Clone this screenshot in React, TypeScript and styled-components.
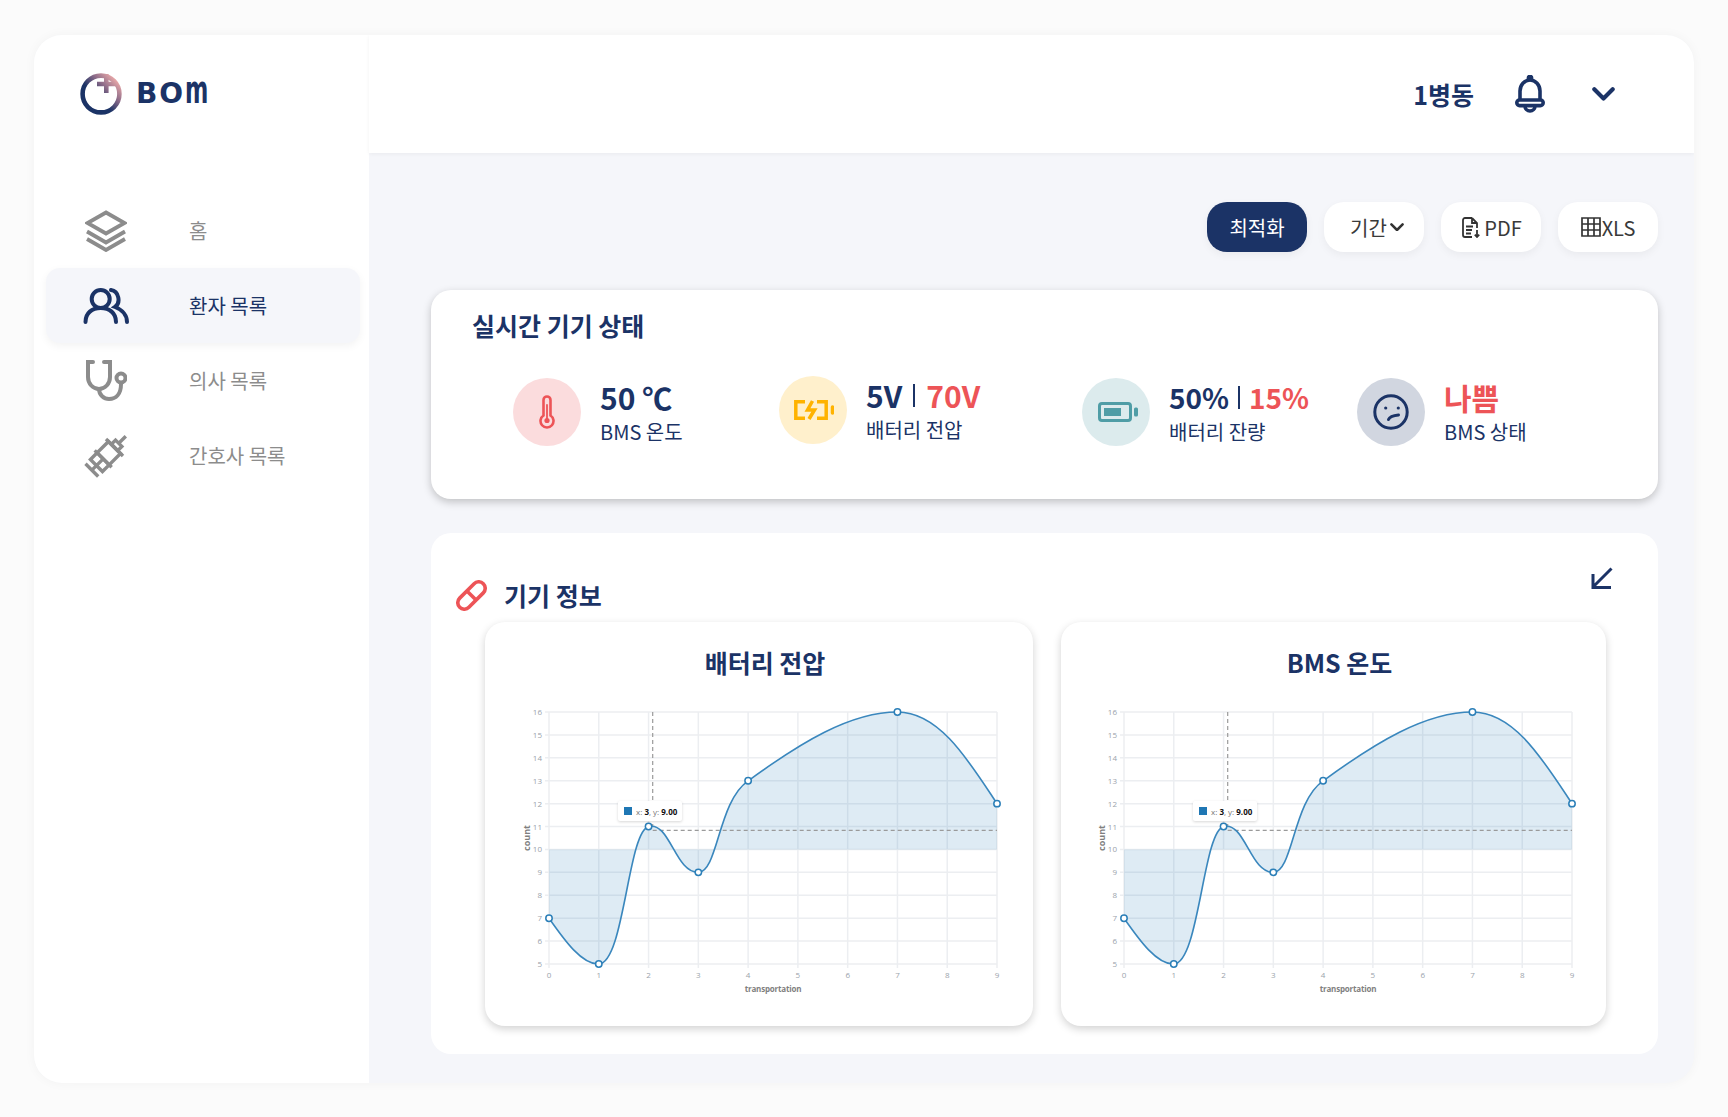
import React from "react";
import styled, { createGlobalStyle } from "styled-components";

const NAVY = "#1b3366";
const RED = "#ed5457";
const GRAY = "#8c8c8c";

const GlobalStyle = createGlobalStyle`
    html, body {
        margin: 0;
        padding: 0;
        background: #fbfbfb;
        font-family: "Noto Sans CJK KR", "Noto Sans", sans-serif;
    }
    * {
        box-sizing: border-box;
    }
`;

const Page = styled.div`
    width: 1728px;
    height: 1117px;
    padding: 35px 34px 34px;
`;

const Shell = styled.div`
    display: flex;
    width: 1660px;
    height: 1048px;
    border-radius: 28px;
    overflow: hidden;
    background: #f5f6fa;
    box-shadow: 0 0 12px rgba(0, 0, 0, 0.04);
`;

const Sidebar = styled.aside`
    width: 335px;
    flex-shrink: 0;
    background: #fff;
    padding: 38px 9px 0 12px;
`;

const Brand = styled.div`
    display: flex;
    align-items: center;
    gap: 14px;
    height: 42px;
    padding-left: 34px;
    margin-bottom: 78px;
`;

const BrandName = styled.div`
    display: flex;
    align-items: baseline;
    font-family: "DejaVu Sans", sans-serif;
    font-weight: 700;
    font-size: 28px;
    line-height: 1;
    color: ${NAVY};
    letter-spacing: 2px;
`;

const BrandTail = styled.span`
    display: inline-block;
    width: 23px;
    letter-spacing: 0;
    transform: scale(0.8, 1.33);
    transform-origin: 0 85%;
`;

const NavList = styled.nav`
    display: flex;
    flex-direction: column;
`;

const NavRow = styled.div<{ $active?: boolean }>`
    display: flex;
    align-items: center;
    height: 75px;
    padding-left: 37px;
    border-radius: 14px;
    font-size: 20px;
    color: ${(p) => (p.$active ? NAVY : GRAY)};
    background: ${(p) => (p.$active ? "#f5f6fa" : "transparent")};
    box-shadow: ${(p) => (p.$active ? "0 3px 8px rgba(0, 0, 0, 0.05)" : "none")};
`;

const NavIcon = styled.span`
    display: flex;
    align-items: center;
    justify-content: center;
    width: 46px;
    margin-right: 60px;
`;

const Content = styled.div`
    flex: 1;
    display: flex;
    flex-direction: column;
    min-width: 0;
`;

const Header = styled.header`
    display: flex;
    align-items: center;
    justify-content: flex-end;
    height: 118px;
    padding-right: 79px;
    background: #fff;
    box-shadow: 0 1px 4px rgba(0, 0, 0, 0.05);
`;

const Ward = styled.div`
    font-size: 25px;
    font-weight: 700;
    color: ${NAVY};
    margin-right: 41px;
`;

const Bell = styled.svg`
    margin-right: 47px;
`;

const Main = styled.main`
    flex: 1;
    padding: 49px 36px 29px 62px;
`;

const Toolbar = styled.div`
    display: flex;
    justify-content: flex-end;
    gap: 17px;
    margin-bottom: 38px;
`;

const ToolButton = styled.button<{ $primary?: boolean; $gap?: number; $shift?: number }>`
    display: flex;
    align-items: center;
    justify-content: center;
    gap: ${(p) => p.$gap ?? 4}px;
    width: 100px;
    height: 50px;
    border: none;
    border-radius: 20px;
    padding: 0 0 0 ${(p) => p.$shift ?? 0}px;
    font-family: inherit;
    font-size: 20px;
    color: ${(p) => (p.$primary ? "#fff" : "#3a3a3a")};
    background: ${(p) => (p.$primary ? NAVY : "#fff")};
    box-shadow: 0 3px 8px rgba(0, 0, 0, 0.05);
`;

const StatusCard = styled.section`
    height: 209px;
    padding: 17px 0 0 41px;
    margin-bottom: 34px;
    background: #fff;
    border-radius: 20px;
    box-shadow: 0 3px 9px rgba(0, 0, 0, 0.22);
`;

const CardTitle = styled.h2`
    margin: 0;
    font-size: 25px;
    line-height: 36px;
    font-weight: 700;
    color: ${NAVY};
`;

const StatGrid = styled.div`
    display: grid;
    grid-template-columns: 266px 303px 275px 1fr;
    padding-left: 41px;
    margin-top: 35px;
`;

const Stat = styled.div<{ $raised?: boolean }>`
    display: flex;
    gap: 19px;
    margin-top: ${(p) => (p.$raised ? "-2px" : "0")};
`;

const StatCircle = styled.div<{ $tone: string }>`
    display: flex;
    align-items: center;
    justify-content: center;
    width: 68px;
    height: 68px;
    border-radius: 50%;
    background: ${(p) => p.$tone};
`;

const StatValue = styled.div<{ $small?: boolean }>`
    display: flex;
    align-items: center;
    gap: ${(p) => (p.$small ? "9px" : "11px")};
    height: 38px;
    font-size: ${(p) => (p.$small ? "28px" : "30px")};
    line-height: 38px;
    font-weight: 700;
    color: ${NAVY};
`;

const Alert = styled.span`
    color: ${RED};
`;

const Bar = styled.span`
    width: 2px;
    height: 23px;
    background: ${NAVY};
`;

const StatLabel = styled.div`
    margin-top: 2px;
    font-size: 20px;
    line-height: 28px;
    color: ${NAVY};
`;

const DeviceCard = styled.section`
    height: 521px;
    padding: 34px 45px 0 25px;
    background: #fff;
    border-radius: 20px;
`;

const DeviceHead = styled.div`
    display: flex;
    align-items: flex-start;
    height: 55px;
`;

const DeviceTitle = styled.div`
    display: flex;
    align-items: center;
    gap: 17px;
    flex: 1;
    margin-top: 10px;
    font-size: 25px;
    line-height: 36px;
    font-weight: 700;
    color: ${NAVY};
`;

const ChartGrid = styled.div`
    display: grid;
    grid-template-columns: 548px 545px;
    gap: 28px;
    padding-left: 29px;
`;

const ChartCard = styled.div<{ $inset: number }>`
    height: 404px;
    padding: 20px 0 0 ${(p) => p.$inset}px;
    background: #fff;
    border-radius: 20px;
    box-shadow: 0 3px 9px rgba(0, 0, 0, 0.18);
`;

const ChartTitle = styled.h3<{ $inset: number }>`
    margin: 0 0 19px -${(p) => p.$inset}px;
    padding-left: 12px;
    font-size: 25px;
    line-height: 40px;
    font-weight: 700;
    text-align: center;
    color: ${NAVY};
`;

const ChartBox = styled.div`
    position: relative;
    width: 500px;
    height: 300px;
`;

const Tooltip = styled.div`
    position: absolute;
    left: 98px;
    top: 100px;
    display: flex;
    align-items: center;
    gap: 4px;
    width: 64px;
    height: 20px;
    padding-left: 6px;
    background: #fff;
    border-radius: 2px;
    box-shadow: 0 1px 3px rgba(0, 0, 0, 0.16);
    font-family: "Open Sans", sans-serif;
    font-size: 8px;
    color: #777;
    white-space: nowrap;
`;

const Swatch = styled.span`
    width: 8px;
    height: 8px;
    background: #1f77b4;
`;

const TipStrong = styled.b`
    color: #111;
`;

const AxisText = styled.text`
    font-family: "Open Sans", sans-serif;
    font-size: 8px;
    fill: #9aa3ab;
`;

const AxisName = styled.text<{ $tight?: boolean }>`
    font-family: "Open Sans", sans-serif;
    font-size: ${(p) => (p.$tight ? "8px" : "9px")};
    letter-spacing: ${(p) => (p.$tight ? "-0.2px" : "0")};
    font-weight: 700;
    fill: #7f7f7f;
`;

// plot area inside the 500x300 chart svg
const PLOT = { left: 29, right: 477, top: 11, bottom: 263 };
const xAt = (v: number) => PLOT.left + ((PLOT.right - PLOT.left) * v) / 9;
const yAt = (v: number) => PLOT.bottom - ((PLOT.bottom - PLOT.top) * (v - 5)) / 11;

const POINTS: [number, number][] = [
    [0, 7],
    [1, 5],
    [2, 11],
    [3, 9],
    [4, 13],
    [7, 16],
    [9, 12],
];

const CURVE =
    "M29 217.2 C45 240 62 263.5 78.8 263 C104 263 108 130 128.6 125.6 C150 120 155 172 178.4 171.4 C198 171 198 100 228.2 79.8 C280 42 330 11 377.6 11 C420 11 450 62 477 102.6";

const LineChart = () => {
    const xTicks = Array.from({ length: 10 }, (_, i) => i);
    const yTicks = Array.from({ length: 12 }, (_, i) => i + 5);
    const base = yAt(10);

    return (
        <ChartBox>
            <svg width="500" height="300" viewBox="0 0 500 300">
                {yTicks.map((v) => (
                    <g key={v}>
                        <line x1={PLOT.left - 4} x2={PLOT.right} y1={yAt(v)} y2={yAt(v)} stroke="#eceef1" strokeWidth="1.5" />
                        <AxisText x={PLOT.left - 7} y={yAt(v) + 3} textAnchor="end">
                            {v}
                        </AxisText>
                    </g>
                ))}
                {xTicks.map((v) => (
                    <g key={v}>
                        <line x1={xAt(v)} x2={xAt(v)} y1={PLOT.top} y2={PLOT.bottom + 4} stroke="#eceef1" strokeWidth="1.5" />
                        <AxisText x={xAt(v)} y={PLOT.bottom + 14} textAnchor="middle">
                            {v}
                        </AxisText>
                    </g>
                ))}
                <path d={`${CURVE} L477 ${base} L29 ${base} Z`} fill="#1f77b4" fillOpacity="0.15" />
                <path d="M132.7 11 V126 M132.7 129.3 H477" fill="none" stroke="#9a9a9a" strokeWidth="1.2" strokeDasharray="4 3" />
                <path d={CURVE} fill="none" stroke="#3a87bd" strokeWidth="1.6" />
                {POINTS.map(([x, y]) => (
                    <circle key={x} cx={xAt(x)} cy={yAt(y)} r="3.2" fill="#fff" stroke="#2b7fb8" strokeWidth="1.5" />
                ))}
                <AxisName $tight x="253" y="291" textAnchor="middle">
                    transportation
                </AxisName>
                <AxisName transform="rotate(-90 9.7 137)" x="9.7" y="137" textAnchor="middle">
                    count
                </AxisName>
            </svg>
            <Tooltip>
                <Swatch />
                <span>
                    x: <TipStrong>3</TipStrong>, y: <TipStrong>9.00</TipStrong>
                </span>
            </Tooltip>
        </ChartBox>
    );
};

const LogoMark = () => (
    <svg width="42" height="42" viewBox="0 0 42 42" fill="none" strokeWidth="4.6">
        <defs>
            <linearGradient id="logoRing" x1="6" y1="36" x2="36" y2="6" gradientUnits="userSpaceOnUse">
                <stop offset="0.38" stopColor={NAVY} />
                <stop offset="0.68" stopColor="#8a6a88" />
                <stop offset="1" stopColor="#eaa9a9" />
            </linearGradient>
        </defs>
        <circle cx="21" cy="21" r="18.4" stroke="url(#logoRing)" />
        <path d="M26.3 1 V20 M17 11 H37" stroke="url(#logoRing)" />
    </svg>
);

const LayersIcon = () => (
    <svg width="42" height="42" viewBox="0 0 42 42" fill="none" stroke={GRAY} strokeWidth="3.8" strokeLinejoin="miter">
        <path d="M21 2.5 L39.5 13 L21 23.5 L2.5 13 Z" />
        <path d="M2 21.5 L21 32.5 L40 21.5" />
        <path d="M2 29 L21 40 L40 29" />
    </svg>
);

const UsersIcon = () => (
    <svg width="46" height="36" viewBox="0 0 46 36" fill="none" stroke={NAVY} strokeWidth="4" strokeLinecap="round">
        <circle cx="17.7" cy="11" r="9" />
        <path d="M2.5 34 C2.5 25 9 20 17.7 20 S33 25 33 34" />
        <path d="M28 2 C36 3 38 15 32 19 C40 22 44 28 44 34" />
    </svg>
);

const StethoscopeIcon = () => (
    <svg width="42" height="42" viewBox="0 0 42 42" fill="none" stroke={GRAY} strokeWidth="4" strokeLinecap="round">
        <path d="M8 2 H3 V17 A11 12 0 0 0 25 17 V2 H19" />
        <path d="M14 29 C14 35 19 39 24 39 C31 39 36 34 36 24" />
        <circle cx="36" cy="18" r="4.5" />
    </svg>
);

const SyringeIcon = () => (
    <svg width="42" height="42" viewBox="0 0 42 42" fill="none" stroke={GRAY} strokeWidth="3.4" overflow="visible">
        <g transform="rotate(45 21 21)">
            <path d="M21 -7 V3" />
            <path d="M16.5 3 H25.5 V9 H16.5 Z" />
            <path d="M9 9 H33" />
            <path d="M12.5 9 H29.5 V25 H12.5 Z" />
            <path d="M9 25 H33" />
            <path d="M12.5 25 V34.5 H29.5 V25 M21 25 V41" />
            <path d="M12 41 H30" />
        </g>
    </svg>
);

const ThermometerIcon = () => (
    <svg width="16" height="34" viewBox="0 0 16 34" fill="none" stroke={RED} strokeWidth="2.6" strokeLinecap="round">
        <path d="M4.5 20.5 V5 A3.5 3.5 0 0 1 11.5 5 V20.5 A6.5 6.5 0 1 1 4.5 20.5 Z" />
        <path d="M8 10 V24" strokeWidth="1.8" />
        <circle cx="8" cy="25.5" r="2.6" fill={RED} stroke="none" />
    </svg>
);

const ChargingIcon = () => (
    <svg width="42" height="20" viewBox="-2 0 42 20" fill="none" stroke="#ffb300" strokeWidth="3.5">
        <path d="M11 1.8 H1.8 V18.2 H11" />
        <path d="M23 1.8 H32.2 V18.2 H23" />
        <path d="M18.5 1 L13.5 10 H20.5 L15 19" />
        <path d="M38.5 7 V13" strokeLinecap="round" />
    </svg>
);

const BatteryIcon = () => (
    <svg width="44" height="20" viewBox="-4 0 44 20" fill="none">
        <rect x="1.5" y="1.5" width="31" height="17" rx="2.5" stroke="#4f9da6" strokeWidth="3" />
        <rect x="6" y="6" width="17" height="8" fill="#4f9da6" />
        <rect x="36" y="5.5" width="4" height="9" rx="1.5" fill="#4f9da6" />
    </svg>
);

const FaceIcon = () => (
    <svg width="36" height="36" viewBox="0 0 36 36" fill="none" stroke={NAVY} strokeWidth="3">
        <circle cx="18" cy="18" r="16.2" />
        <circle cx="12.7" cy="14" r="1.6" fill={NAVY} stroke="none" />
        <circle cx="25.3" cy="14" r="1.6" fill={NAVY} stroke="none" />
        <path d="M15.5 25.5 C16.5 23 20 21.5 25.5 21" strokeLinecap="round" />
    </svg>
);

const PillIcon = () => (
    <svg width="31" height="31" viewBox="0 0 31 31" fill="none" stroke={RED} strokeWidth="3.6">
        <g transform="rotate(-45 15.5 15.5)">
            <rect x="-1.2" y="9" width="33.4" height="13" rx="6.5" />
            <path d="M15.5 9 V22" />
        </g>
    </svg>
);

const FileIcon = () => (
    <svg width="18" height="21" viewBox="0 0 18 21" fill="none" stroke="#333" strokeWidth="1.8">
        <path d="M10 1 H3 A2 2 0 0 0 1 3 V18 A2 2 0 0 0 3 20 H10 M10 1 L15 6 V11 M10 1 V6 H15" />
        <path d="M4 9.5 H11 M4 13 H10 M4 16.5 H9" />
        <path d="M15 13 V20 M12.8 17.6 L15 20 L17.2 17.6" />
    </svg>
);

const TableIcon = () => (
    <svg width="20" height="20" viewBox="0 0 20 20" fill="none" stroke="#333" strokeWidth="1.7">
        <path d="M1 1 H19 V19 H1 Z M7 1 V19 M13 1 V19 M1 7 H19 M1 13 H19" />
    </svg>
);

const Chevron = ({ size, stroke, color }: { size: number; stroke: number; color: string }) => (
    <svg width={size} height={size * 0.6} viewBox="0 0 20 12" fill="none" stroke={color} strokeWidth={stroke} strokeLinecap="round" strokeLinejoin="round">
        <path d="M2 2 L10 10 L18 2" />
    </svg>
);

const CollapseIcon = () => (
    <svg width="22" height="22" viewBox="0 0 22 22" fill="none" stroke={NAVY} strokeWidth="3">
        <path d="M20.5 1.5 L2 20 M2 7 V20.5 H20" />
    </svg>
);

const NAV_ITEMS = [
    { label: "홈", icon: <LayersIcon /> },
    { label: "환자 목록", icon: <UsersIcon />, active: true },
    { label: "의사 목록", icon: <StethoscopeIcon /> },
    { label: "간호사 목록", icon: <SyringeIcon /> },
];

const App = () => {
    return (
        <Page>
            <GlobalStyle />
            <Shell>
                <Sidebar>
                    <Brand>
                        <LogoMark />
                        <BrandName>
                            BO<BrandTail>m</BrandTail>
                        </BrandName>
                    </Brand>
                    <NavList>
                        {NAV_ITEMS.map((item) => (
                            <NavRow key={item.label} $active={item.active}>
                                <NavIcon>{item.icon}</NavIcon>
                                {item.label}
                            </NavRow>
                        ))}
                    </NavList>
                </Sidebar>

                <Content>
                    <Header>
                        <Ward>1병동</Ward>
                        <Bell width="30" height="38" viewBox="0 0 30 38" fill="none" stroke={NAVY} strokeWidth="3.6">
                            <circle cx="15" cy="3" r="1.6" fill={NAVY} />
                            <path d="M5 25 V16 A10 11 0 0 1 25 16 V25" />
                            <rect x="1.8" y="25" width="26.4" height="5.6" rx="2.8" />
                            <path d="M10 31 A5 5 0 0 0 20 31" />
                        </Bell>
                        <Chevron size={23} stroke={3.6} color={NAVY} />
                    </Header>

                    <Main>
                        <Toolbar>
                            <ToolButton $primary>최적화</ToolButton>
                            <ToolButton $shift={6} $gap={3}>
                                기간
                                <Chevron size={14} stroke={3.6} color="#333" />
                            </ToolButton>
                            <ToolButton $shift={2}>
                                <FileIcon />
                                PDF
                            </ToolButton>
                            <ToolButton $gap={1}>
                                <TableIcon />
                                XLS
                            </ToolButton>
                        </Toolbar>

                        <StatusCard>
                            <CardTitle>실시간 기기 상태</CardTitle>
                            <StatGrid>
                                <Stat>
                                    <StatCircle $tone="#fbdcdd">
                                        <ThermometerIcon />
                                    </StatCircle>
                                    <div>
                                        <StatValue>50 ℃</StatValue>
                                        <StatLabel>BMS 온도</StatLabel>
                                    </div>
                                </Stat>
                                <Stat $raised>
                                    <StatCircle $tone="#fff0cc">
                                        <ChargingIcon />
                                    </StatCircle>
                                    <div>
                                        <StatValue>
                                            5V
                                            <Bar />
                                            <Alert>70V</Alert>
                                        </StatValue>
                                        <StatLabel>배터리 전압</StatLabel>
                                    </div>
                                </Stat>
                                <Stat>
                                    <StatCircle $tone="#dcebed">
                                        <BatteryIcon />
                                    </StatCircle>
                                    <div>
                                        <StatValue $small>
                                            50%
                                            <Bar />
                                            <Alert>15%</Alert>
                                        </StatValue>
                                        <StatLabel>배터리 잔량</StatLabel>
                                    </div>
                                </Stat>
                                <Stat>
                                    <StatCircle $tone="#d1d6e0">
                                        <FaceIcon />
                                    </StatCircle>
                                    <div>
                                        <StatValue>
                                            <Alert>나쁨</Alert>
                                        </StatValue>
                                        <StatLabel>BMS 상태</StatLabel>
                                    </div>
                                </Stat>
                            </StatGrid>
                        </StatusCard>

                        <DeviceCard>
                            <DeviceHead>
                                <DeviceTitle>
                                    <PillIcon />
                                    기기 정보
                                </DeviceTitle>
                                <CollapseIcon />
                            </DeviceHead>
                            <ChartGrid>
                                <ChartCard $inset={35}>
                                    <ChartTitle $inset={35}>배터리 전압</ChartTitle>
                                    <LineChart />
                                </ChartCard>
                                <ChartCard $inset={34}>
                                    <ChartTitle $inset={34}>BMS 온도</ChartTitle>
                                    <LineChart />
                                </ChartCard>
                            </ChartGrid>
                        </DeviceCard>
                    </Main>
                </Content>
            </Shell>
        </Page>
    );
};

export default App;
